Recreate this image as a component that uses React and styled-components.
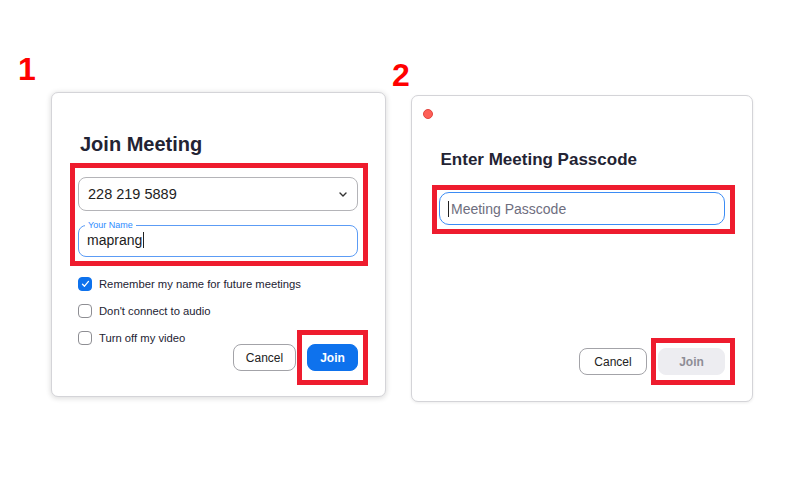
import React from 'react';
import styled, {createGlobalStyle} from "styled-components";

const GlobalStyle = createGlobalStyle`
  * { box-sizing: border-box; }
  body {
    margin: 0;
    background: #fff;
    font-family: "Liberation Sans", Arial, sans-serif;
  }
`

const Page = styled.div`
  display: flex;
  align-items: flex-start;
  width: 800px;
  height: 500px;
  padding-left: 18px;
`

const Step = styled.section`
  display: flex;
  flex-direction: column;
  align-items: flex-start;
  padding-top: ${({top}) => top}px;
  margin-left: ${({shift}) => shift || 0}px;
`

const StepNumber = styled.div`
  font-size: 32px;
  line-height: 32px;
  font-weight: 700;
  color: #ff0000;
`

const Card = styled.div`
  display: flex;
  flex-direction: column;
  width: ${({w}) => w}px;
  height: ${({h}) => h}px;
  margin-top: ${({gap}) => gap}px;
  margin-left: ${({indent}) => indent}px;
  background: #fff;
  border: 1px solid #d4d4d8;
  border-radius: 7px;
  box-shadow: ${({soft}) => soft ? "0 1px 3px rgba(0,0,0,.08)" : "0 1px 5px 1px rgba(0,0,0,.12)"};
  padding: ${({pad}) => pad};
`

const Title = styled.h2`
  margin: ${({m}) => m};
  font-size: ${({size}) => size}px;
  line-height: ${({lh}) => lh}px;
  font-weight: 700;
  color: #232333;
`

// the red highlight frame drawn over the screenshot
const RedFrame = styled.div`
  display: flex;
  flex-direction: column;
  flex-shrink: 0;
  border: 5px solid #ee1c2e;
  padding: ${({pad}) => pad};
  margin: ${({m}) => m || 0};
`

const Select = styled.div`
  display: flex;
  align-items: center;
  justify-content: space-between;
  height: 34px;
  border: 1px solid #b4b4b8;
  border-radius: 8px;
  padding: 0 10px 0 9px;
  font-size: 14.5px;
  color: #222;
`

const NameField = styled.fieldset`
  margin: 9px 0 0;
  min-width: 0;
  height: 37px;
  padding: 0 8px;
  border: 1.5px solid #5c9cf5;
  border-radius: 8px;

  legend {
    margin-left: -2px;
    padding: 0 3px;
    font-size: 9px;
    line-height: 10px;
    color: #2d8cff;
  }
`

const FieldText = styled.div`
  display: flex;
  align-items: center;
  height: 20px;
  font-size: 14px;
  color: ${({placeholder}) => placeholder ? "#6e6e7e" : "#1c1c1c"};
`

const Caret = styled.span`
  display: inline-block;
  width: 1px;
  height: 16px;
  background: #222;
  margin: ${({before}) => before ? "0 2px 0 0" : "0 0 0 1px"};
`

const PasscodeInput = styled.div`
  display: flex;
  align-items: center;
  height: 33px;
  padding-left: 8px;
  border: 1.5px solid #3b8cf5;
  border-radius: 10px;
`

// options and buttons share one grid cell: the list hangs from the top, the buttons sit at the bottom right
const Footer = styled.div`
  display: grid;
  flex: 1;
  grid-template: 1fr / 1fr;
`

const Options = styled.ul`
  grid-area: 1 / 1;
  align-self: start;
  justify-self: start;
  list-style: none;
  margin: 4px 0 0 8px;
  padding: 0;
  white-space: nowrap;
`

const Option = styled.li`
  display: flex;
  align-items: center;
  gap: 7px;
  height: 27px;
  font-size: 11.25px;
  color: #232333;
`

const Box = styled.span`
  display: flex;
  flex-shrink: 0;
  align-items: center;
  justify-content: center;
  width: 14px;
  height: 14px;
  border-radius: 4px;
  border: 1px solid ${({checked}) => checked ? "#0e72ed" : "#8e8e93"};
  background: ${({checked}) => checked ? "#0e72ed" : "#fff"};
`

const Actions = styled.div`
  grid-area: 1 / 1;
  align-self: end;
  justify-self: end;
  display: flex;
  align-items: center;
  gap: ${({gap}) => gap}px;
`

const Button = styled.button`
  width: ${({w}) => w}px;
  height: 27px;
  border-radius: 8px;
  font-family: inherit;
  font-size: 12px;
  padding: 0;
  font-weight: ${({primary, disabled}) => primary || disabled ? 700 : 400};
  border: 1px solid ${({primary, disabled}) => primary ? "#0e72ed" : disabled ? "#ededf1" : "#a3a3a8"};
  background: ${({primary, disabled}) => primary ? "#0e72ed" : disabled ? "#ededf1" : "#fff"};
  color: ${({primary, disabled}) => primary ? "#fff" : disabled ? "#8e8e96" : "#222"};
`

const CloseDot = styled.span`
  display: block;
  width: 10px;
  height: 10px;
  border-radius: 50%;
  background: #fe5f57;
  border: 0.5px solid #e2463f;
  margin-top: 13px;
`

const Chevron = () => (
    <svg width="8" height="5" viewBox="0 0 8 5">
        <path d="M1 1l3 3 3-3" fill="none" stroke="#333" strokeWidth="1.4" strokeLinecap="round" strokeLinejoin="round"/>
    </svg>
)

const Check = () => (
    <svg width="9" height="8" viewBox="0 0 9 8">
        <path d="M1.5 4.2l2 2 4-4.8" fill="none" stroke="#fff" strokeWidth="1.3" strokeLinecap="round" strokeLinejoin="round"/>
    </svg>
)

const options = [
    {label: "Remember my name for future meetings", checked: true},
    {label: "Don't connect to audio", checked: false},
    {label: "Turn off my video", checked: false},
]

const App = () => {
    return (
        <>
            <GlobalStyle/>
            <Page>
                <Step top={53}>
                    <StepNumber>1</StepNumber>
                    <Card w={335} h={305} gap={7} indent={33} pad="39px 17px 11px 18px">
                        <Title size={20} lh={24} m="0 0 0 10px">Join Meeting</Title>
                        <RedFrame pad="9px 5px 4px 3px" m="7px 0 0 0">
                            <Select>
                                228 219 5889
                                <Chevron/>
                            </Select>
                            <NameField>
                                <legend>Your Name</legend>
                                <FieldText>maprang<Caret/></FieldText>
                            </NameField>
                        </RedFrame>
                        <Footer>
                            <Options>
                                {options.map(o => (
                                    <Option key={o.label}>
                                        <Box checked={o.checked}>{o.checked ? <Check/> : null}</Box>
                                        {o.label}
                                    </Option>
                                ))}
                            </Options>
                            <Actions gap={1}>
                                <Button w={63}>Cancel</Button>
                                <RedFrame pad="9px 5px">
                                    <Button w={51} primary>Join</Button>
                                </RedFrame>
                            </Actions>
                        </Footer>
                    </Card>
                </Step>

                <Step top={59} shift={6}>
                    <StepNumber>2</StepNumber>
                    <Card w={342} h={307} gap={4} indent={19} pad="0 17px 16px 11px" soft>
                        <CloseDot/>
                        <Title size={17} lh={20} m="31px 0 0 17.5px">Enter Meeting Passcode</Title>
                        <RedFrame pad="2px 5px 4px 2px" m="15px 0 0 9px">
                            <PasscodeInput>
                                <FieldText placeholder>
                                    <Caret before/>Meeting Passcode
                                </FieldText>
                            </PasscodeInput>
                        </RedFrame>
                        <Footer>
                            <Actions gap={4}>
                                <Button w={68}>Cancel</Button>
                                <RedFrame pad="5px 5px 5px 2px">
                                    <Button w={67} disabled>Join</Button>
                                </RedFrame>
                            </Actions>
                        </Footer>
                    </Card>
                </Step>
            </Page>
        </>
    );
};

export default App;
